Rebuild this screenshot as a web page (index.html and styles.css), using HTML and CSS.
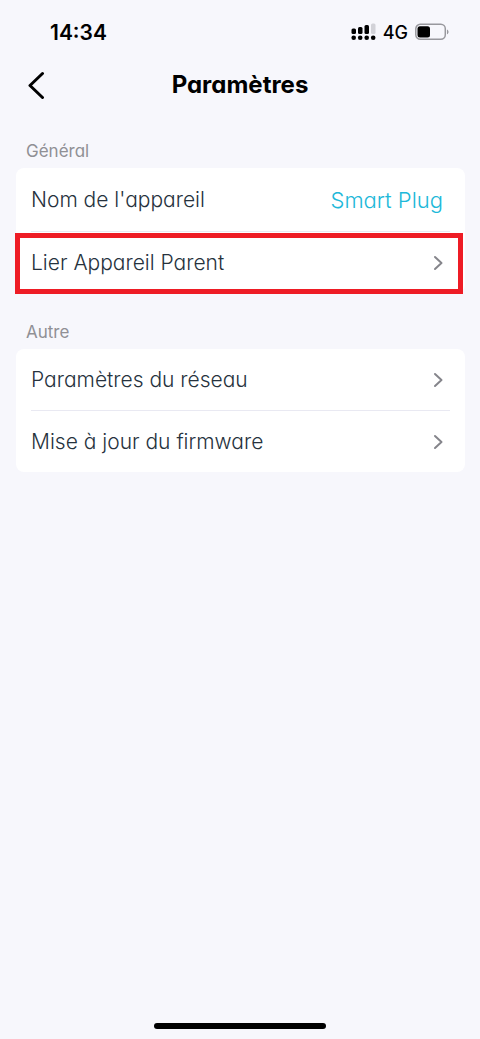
FILE: index.html
```html
<!DOCTYPE html>
<html lang="fr">
<head>
<meta charset="utf-8">
<meta name="viewport" content="width=device-width, initial-scale=1">
<title>Paramètres</title>
<link rel="stylesheet" href="styles.css">
</head>
<body>
<div class="screen">
  <div class="status">
    <span class="time">14:34</span>
    <div class="indicators">
      <svg class="signal" width="26" height="18" viewBox="0 0 26 18" aria-hidden="true">
        <rect x="1.500" y="5.500" width="4.500" height="5.500" rx="1.500"/>
        <rect x="8" y="4" width="4.500" height="7" rx="1.500"/>
        <rect x="14.500" y="2" width="4.500" height="9" rx="1.500"/>
        <rect class="faint" x="21" y="0.500" width="4.500" height="10.500" rx="1.500"/>
        <circle cx="3.700" cy="14.800" r="2.300"/>
        <circle cx="10.200" cy="14.800" r="2.300"/>
        <circle cx="16.700" cy="14.800" r="2.300"/>
        <circle cx="23.200" cy="14.800" r="2.300"/>
      </svg>
      <span class="network">4G</span>
      <svg class="battery" width="34" height="18" viewBox="0 0 34 18" aria-hidden="true">
        <rect class="shell" x="0.800" y="1.300" width="29.500" height="15" rx="4.500"/>
        <rect x="2.500" y="3.200" width="12.500" height="11.300" rx="2.500"/>
        <path class="tip" d="M32 6.500c2 .8 2 4 0 4.800z"/>
      </svg>
    </div>
  </div>
  <header class="header">
    <button class="back" type="button" aria-label="Retour">
      <svg width="18" height="28" viewBox="0 0 18 28" aria-hidden="true"><path d="M14.500 2.500 2 14.500 14.500 26.500"/></svg>
    </button>
    <h1 class="title">Paramètres</h1>
  </header>
  <main class="content">
    <section class="group">
      <h2 class="caption">Général</h2>
      <div class="card">
        <button class="row row-name" type="button"><span>Nom de l'appareil</span><span class="value">Smart Plug</span></button>
        <button class="row highlighted" type="button"><span>Lier Appareil Parent</span><svg class="chevron" width="10" height="16" viewBox="0 0 10 16" aria-hidden="true"><path d="M2 2 8.500 8 2 14"/></svg></button>
      </div>
    </section>
    <section class="group">
      <h2 class="caption">Autre</h2>
      <div class="card">
        <button class="row" type="button"><span>Paramètres du réseau</span><svg class="chevron" width="10" height="16" viewBox="0 0 10 16" aria-hidden="true"><path d="M2 2 8.500 8 2 14"/></svg></button>
        <button class="row" type="button"><span>Mise à jour du firmware</span><svg class="chevron" width="10" height="16" viewBox="0 0 10 16" aria-hidden="true"><path d="M2 2 8.500 8 2 14"/></svg></button>
      </div>
    </section>
  </main>
  <div class="home-bar"></div>
</div>
</body>
</html>
```

FILE: styles.css
```css
* {
  box-sizing: border-box;
}

body {
  margin: 0;
  background: #f7f7fc;
  color: #26323d;
  font-family: Inter, "Liberation Sans", sans-serif;
  font-feature-settings: "cv11";
}

button {
  border: 0;
  background: none;
  color: inherit;
  font: inherit;
  font-feature-settings: inherit;
}

.screen {
  display: flex;
  flex-direction: column;
  min-height: 100vh;
  padding-bottom: 10px;
}

.status {
  display: flex;
  align-items: center;
  justify-content: space-between;
  height: 64px;
  padding: 0 31px 0 50px;
  color: #000;
}

.time {
  font-size: 21px;
  font-weight: 600;
}

.indicators {
  display: flex;
  align-items: center;
  gap: 7px;
}

.network {
  font-size: 18px;
  font-weight: 500;
}

.faint {
  fill: #d2d2d8;
}

.shell {
  fill: none;
  stroke: #98989d;
  stroke-width: 1.5;
}

.tip {
  fill: #98989d;
}

.header {
  display: grid;
  grid-template-columns: 48px 1fr 48px;
  align-items: center;
  height: 42px;
  padding: 0 16px;
  color: #000;
}

.back {
  display: flex;
  padding: 4px 12px;
}

.back path {
  fill: none;
  stroke: currentColor;
  stroke-width: 3;
  stroke-linecap: round;
  stroke-linejoin: round;
}

.title {
  margin: 0;
  font-size: 24px;
  font-weight: 700;
  line-height: 32px;
  text-align: center;
}

.content {
  display: flex;
  flex: 1;
  flex-direction: column;
  gap: 28px;
  padding: 34px 15px 0 16px;
}

.caption {
  margin: 0 0 5px;
  padding-left: 10px;
  color: #909095;
  font-size: 17px;
  font-weight: 400;
  line-height: 23px;
}

.card {
  border-radius: 8px;
  background: #fff;
}

.row {
  position: relative;
  display: flex;
  align-items: center;
  justify-content: space-between;
  width: 100%;
  height: 61px;
  padding: 0 22px 0 15px;
  font-size: 21px;
  font-weight: 300;
  line-height: 28px;
  text-align: left;
}

.row-name {
  height: 63px;
}

.row + .row {
  height: 62px;
  padding-top: 2px;
}

.row + .row::before {
  position: absolute;
  top: 0;
  right: 15px;
  left: 15px;
  height: 1px;
  background: #e9e9f2;
  content: "";
}

.highlighted::after {
  position: absolute;
  inset: 2px 2px -1px -1px;
  border: 5px solid #ee1c25;
  content: "";
}

.value {
  color: #20b8d9;
  font-size: 22px;
}

.chevron path {
  fill: none;
  stroke: #85858b;
  stroke-width: 2;
  stroke-linecap: round;
  stroke-linejoin: round;
}

.home-bar {
  align-self: center;
  width: 36%;
  height: 6px;
  border-radius: 3px;
  background: #000;
}
```
